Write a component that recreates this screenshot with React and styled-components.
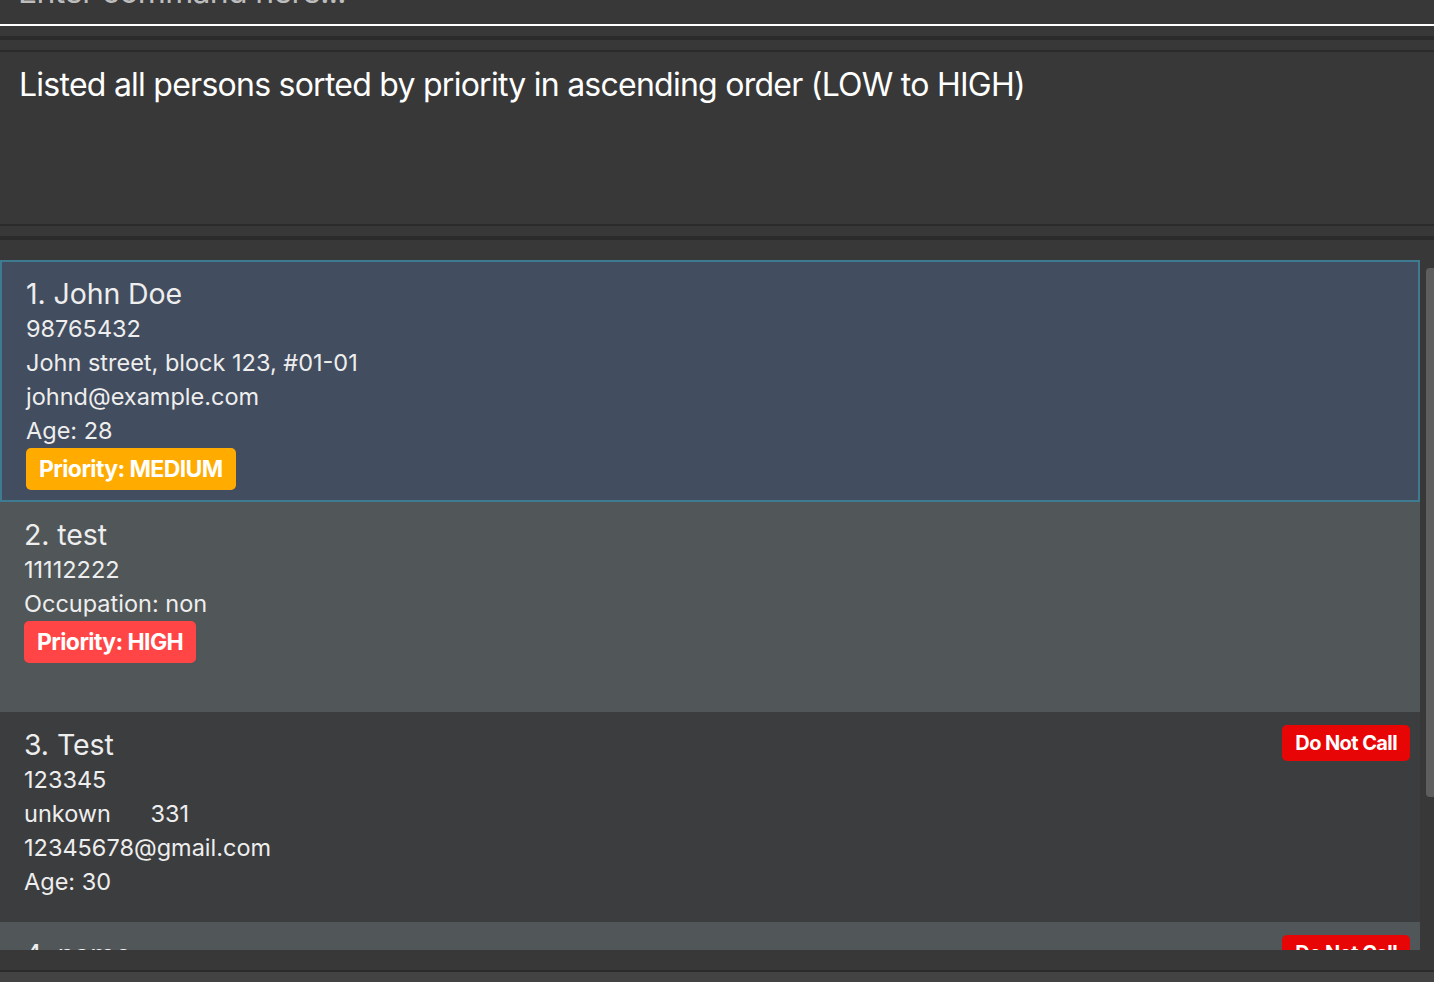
import React from 'react';
import styled, { createGlobalStyle } from 'styled-components';

const GlobalStyle = createGlobalStyle`
	html, body {
		margin: 0;
		padding: 0;
		background: #383838;
	}
	body {
		font-family: Inter, "Open Sans", "Liberation Sans", sans-serif;
		color: #eeeeee;
	}
`;

const Window = styled.div`
	width: 1434px;
	height: 982px;
	overflow: hidden;
	display: flex;
	flex-direction: column;
	background: #383838;
`;

const CommandBox = styled.div`
	height: 24px;
	flex: none;
	overflow: hidden;
	border-bottom: 2px solid #ffffff;
	padding-left: 18px;
`;

const Placeholder = styled.div`
	font-size: 32px;
	line-height: 40px;
	margin-top: -28px;
	color: #bdbdbd;
	letter-spacing: -0.7px;
	white-space: nowrap;
`;

const Gap = styled.div`
	height: ${(p) => p.$h}px;
	flex: none;
`;

const Band = styled.div`
	height: ${(p) => p.$h}px;
	flex: none;
	background: #2b2b2b;
`;

const ResultBox = styled.div`
	height: 176px;
	flex: none;
	box-sizing: border-box;
	border-top: 2px solid #2b2b2b;
	border-bottom: 2px solid #2b2b2b;
	padding: 14px 19px;
	font-size: 32px;
	line-height: 38px;
	color: #ffffff;
	letter-spacing: -0.75px;
`;

const ListArea = styled.div`
	height: 690px;
	flex: none;
	display: flex;
`;

const Cards = styled.div`
	width: 1420px;
	overflow: hidden;
	display: flex;
	flex-direction: column;
`;

const ScrollTrack = styled.div`
	width: 14px;
	padding: 8px 0 0 6px;
	box-sizing: border-box;
`;

const Thumb = styled.div`
	width: 8px;
	height: 529px;
	border-radius: 4px 0 0 4px;
	background: #5e5e5e;
`;

const Card = styled.div`
	flex: none;
	box-sizing: border-box;
	min-height: 210px;
	display: flex;
	justify-content: space-between;
	align-items: flex-start;
	padding: 13px 10px 12px 24px;
	background: ${(p) => p.$bg};
	${(p) =>
		p.$selected &&
		`
		border: 2px solid #3e7b91;
		padding: 12px 8px 10px 24px;
	`}
`;

const Details = styled.div`
	display: flex;
	flex-direction: column;
	align-items: flex-start;
`;

const Name = styled.div`
	font-size: 28.5px;
	line-height: 38px;
	padding-top: 1px;
	margin-bottom: -1px;
	color: #eeeeee;
	letter-spacing: -0.1px;
`;

const Line = styled.div`
	font-size: 23.5px;
	line-height: 34px;
	color: #eeeeee;
	white-space: pre;
`;

const Badge = styled.div`
	background: ${(p) => p.$color};
	color: #ffffff;
	font-weight: 700;
	font-size: ${(p) => (p.$small ? 20 : 23)}px;
	line-height: ${(p) => (p.$small ? 36 : 42)}px;
	padding: 0 13px;
	border-radius: 5px;
	letter-spacing: -0.6px;
	white-space: nowrap;
`;

const StatusBar = styled.div`
	flex: 1;
	border-top: 2px solid #2b2b2b;
	background: #434343;
`;

const persons = [
	{
		name: '1. John Doe',
		lines: ['98765432', 'John street, block 123, #01-01', 'johnd@example.com', 'Age: 28'],
		priority: { label: 'Priority: MEDIUM', color: '#ffab00' },
		bg: '#424d5f',
		selected: true,
	},
	{
		name: '2. test',
		lines: ['11112222', 'Occupation: non'],
		priority: { label: 'Priority: HIGH', color: '#ff4545' },
		bg: '#515658',
	},
	{
		name: '3. Test',
		lines: ['123345', 'unkown      331', '12345678@gmail.com', 'Age: 30'],
		dnc: true,
		bg: '#3c3d3f',
	},
	{
		name: '4. name',
		lines: ['00000000'],
		dnc: true,
		bg: '#515658',
	},
];

const PersonCard = ({ person }) => (
	<Card $bg={person.bg} $selected={person.selected}>
		<Details>
			<Name>{person.name}</Name>
			{person.lines.map((l) => (
				<Line key={l}>{l}</Line>
			))}
			{person.priority && <Badge $color={person.priority.color}>{person.priority.label}</Badge>}
		</Details>
		{person.dnc && (
			<Badge $small $color="#e80505">
				Do Not Call
			</Badge>
		)}
	</Card>
);

export default function App() {
	return (
		<>
			<GlobalStyle />
			<Window>
				<CommandBox>
					<Placeholder>Enter command here...</Placeholder>
				</CommandBox>
				<Gap $h={10} />
				<Band $h={4} />
				<Gap $h={10} />
				<ResultBox>Listed all persons sorted by priority in ascending order (LOW to HIGH)</ResultBox>
				<Gap $h={10} />
				<Band $h={4} />
				<Gap $h={20} />
				<ListArea>
					<Cards>
						{persons.map((p) => (
							<PersonCard key={p.name} person={p} />
						))}
					</Cards>
					<ScrollTrack>
						<Thumb />
					</ScrollTrack>
				</ListArea>
				<Gap $h={20} />
				<StatusBar />
			</Window>
		</>
	);
}
